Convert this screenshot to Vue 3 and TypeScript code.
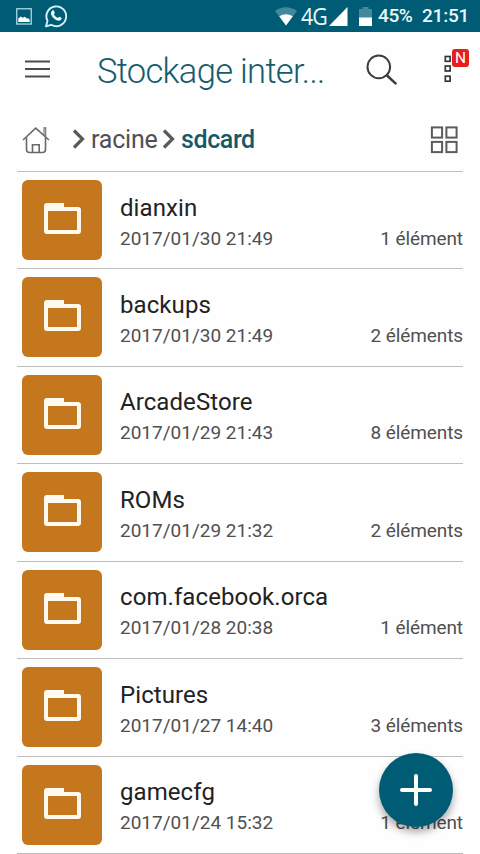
<script setup lang="ts">
interface Folder {
  name: string
  date: string
  count: string
}

const folders: Folder[] = [
  { name: 'dianxin', date: '2017/01/30 21:49', count: '1 élément' },
  { name: 'backups', date: '2017/01/30 21:49', count: '2 éléments' },
  { name: 'ArcadeStore', date: '2017/01/29 21:43', count: '8 éléments' },
  { name: 'ROMs', date: '2017/01/29 21:32', count: '2 éléments' },
  { name: 'com.facebook.orca', date: '2017/01/28 20:38', count: '1 élément' },
  { name: 'Pictures', date: '2017/01/27 14:40', count: '3 éléments' },
  { name: 'gamecfg', date: '2017/01/24 15:32', count: '1 élément' },
]
</script>

<template>
  <div class="screen">
    <div class="status">
      <svg class="s-photo" width="16" height="17" viewBox="0 0 16 17">
        <rect x="0.75" y="0.75" width="14.5" height="15.300" fill="none" stroke="#a9d9e4" stroke-width="1.300" />
        <path d="M2.300 14V10.500l2.500-2 2 1.200 2-1 2.200 1.800 1.200-.3 1.500 1.600V14z" fill="#fff" />
      </svg>
      <svg class="s-wa" width="22" height="24" viewBox="0 0 22 24">
        <path d="M1 22.400l1.500-5.600A9.900 9.900 0 1 1 6.300 20.800z" fill="none" stroke="#d3f3fa" stroke-width="1.900" stroke-linejoin="round" />
        <path d="M7.300 6.500c.5-.5 1.300-.5 1.600.1l.9 2.100c.1.400-.8 1.200-.8 1.600.8 1.700 2 2.800 3.800 3.600.5 0 1.100-1.400 1.600-1.200l2 1c.5.400.1 1.800-.7 2.400-1.300.9-3 .6-5-.4-2.300-1.200-4.200-3.500-4.700-5.600-.2-1.500.5-2.900 1.300-3.600z" fill="#e8fbff" />
      </svg>
      <span class="spacer"></span>
      <svg class="s-wifi" width="22" height="19" viewBox="0 0 22 19">
        <path d="M0 4Q11-3.500 22 4L11 18.500z" fill="#43899b" />
        <path d="M4.200 9.300Q11 5 17.800 9.300L11 18.500z" fill="#fff" />
      </svg>
      <span class="net">4G</span>
      <svg class="s-signal" width="19" height="19" viewBox="0 0 19 19"><path d="M18.500 0v19H0z" fill="#fff" /></svg>
      <svg class="s-battery" width="13" height="19" viewBox="0 0 13 19">
        <path d="M3.500 0h6v2H13v17H0V2h3.500z" fill="#43899b" />
        <path d="M0 10.500h13V19H0z" fill="#fff" />
      </svg>
      <span class="percent">45%</span>
      <span class="clock">21:51</span>
    </div>

    <header class="toolbar">
      <svg class="menu" width="26" height="20" viewBox="0 0 26 20">
        <path d="M0 2.500h25M0 10h25M0 17.500h25" stroke="#4c4c4c" stroke-width="2.200" />
      </svg>
      <h1>Stockage inter...</h1>
      <svg class="search" width="32" height="32" viewBox="0 0 32 32" fill="none" stroke="#3c3c3c" stroke-width="2">
        <circle cx="12.800" cy="12.900" r="11.300" />
        <path d="M20.500 21l9.800 9.200" stroke-width="2.500" />
      </svg>
      <div class="more">
        <svg width="8" height="28" viewBox="0 0 8 28" fill="none" stroke="#373737" stroke-width="1.700">
          <rect x="1.300" y="1.500" width="4.800" height="4.800" />
          <rect x="1.300" y="11" width="4.800" height="5" />
          <rect x="1.300" y="21.200" width="4.800" height="5" />
        </svg>
        <span class="badge">N</span>
      </div>
    </header>

    <nav class="crumbs">
      <svg class="home" width="28" height="28" viewBox="0 0 28 28" fill="none" stroke="#696969" stroke-width="1.600">
        <path d="M1 14L13.700 2.200 27 14" />
        <path d="M4.500 11.500v12q0 3 3 3h13q3 0 3-3v-12" />
        <path d="M22 9.500V1.700h1.700v9" stroke-width="1.100" />
        <path d="M10.500 26.500v-7.800h6.700v7.800" />
      </svg>
      <svg class="chev" width="13" height="21" viewBox="0 0 13 21"><path d="M2 1.500l8.500 8.500L2 18.500" fill="none" stroke="#5a5a5a" stroke-width="3.200" /></svg>
      <span class="root">racine</span>
      <svg class="chev" width="13" height="21" viewBox="0 0 13 21"><path d="M2 1.500l8.500 8.500L2 18.500" fill="none" stroke="#5a5a5a" stroke-width="3.200" /></svg>
      <span class="current">sdcard</span>
      <svg class="grid" width="28" height="28" viewBox="0 0 28 28" fill="none" stroke="#5c5c5c" stroke-width="2">
        <rect x="1.900" y="1.400" width="10.200" height="10.200" />
        <rect x="16.400" y="1.400" width="10.200" height="10.200" />
        <rect x="1.900" y="15.900" width="10.200" height="10.200" />
        <rect x="16.400" y="15.900" width="10.200" height="10.200" />
      </svg>
    </nav>

    <ul class="list">
      <li v-for="folder in folders" :key="folder.name">
        <div class="tile">
          <svg width="38" height="33" viewBox="0 0 38 33">
            <path d="M3 0h17v4h14q3 0 3 3v21q0 3-3 3H3q-3 0-3-3V3q0-3 3-3zM4 8v19h29V8z" fill="#fffaf0" fill-rule="evenodd" />
          </svg>
        </div>
        <div class="info">
          <span class="name">{{ folder.name }}</span>
          <div class="meta">
            <span class="date">{{ folder.date }}</span>
            <span class="count">{{ folder.count }}</span>
          </div>
        </div>
      </li>
    </ul>

    <button class="fab" aria-label="+">
      <svg width="32" height="32" viewBox="0 0 32 32"><path d="M16 2v28M2 16h28" stroke="#fff" stroke-width="4" stroke-linecap="round" /></svg>
    </button>
  </div>
</template>

<style>
body {
  margin: 0;
  overflow: hidden;
}
</style>

<style scoped>
.screen {
  position: relative;
  width: 480px;
  height: 854px;
  overflow: hidden;
  background: #fefefe;
  font-family: Roboto, "Liberation Sans", sans-serif;
}
svg {
  display: block;
  flex: none;
}
.status {
  display: flex;
  align-items: center;
  box-sizing: border-box;
  height: 32px;
  padding: 0 12px 0 16px;
  background: #005c75;
  color: #e9f8fb;
  white-space: nowrap;
}
.s-wa {
  margin-left: 13px;
}
.spacer {
  flex: 1;
}
.s-wifi {
  margin-top: 1px;
}
.net {
  width: 28px;
  margin-left: 4px;
  font: 24px/34px "Open Sans", sans-serif;
  letter-spacing: -1px;
  transform: scaleX(0.89);
  transform-origin: left;
}
.s-battery {
  margin-left: 11px;
}
.percent,
.clock {
  font-size: 19px;
  font-weight: 500;
  line-height: 34px;
}
.percent {
  width: 35px;
  margin-left: 6px;
  letter-spacing: -0.4px;
}
.clock {
  width: 46px;
  margin-left: 9px;
  letter-spacing: -0.2px;
}
.toolbar {
  display: flex;
  box-sizing: border-box;
  height: 76px;
  padding: 0 11px 0 25px;
}
.menu {
  margin-top: 27px;
}
h1 {
  width: 269px;
  margin: 0 0 0 46px;
  font-size: 34.500px;
  font-weight: 300;
  line-height: 78px;
  letter-spacing: -0.68px;
  color: #165c6c;
  white-space: nowrap;
}
.search {
  margin-top: 22px;
}
.more {
  position: relative;
  margin: 23px 0 0 46px;
}
.badge {
  position: absolute;
  left: 8px;
  top: -6px;
  width: 17px;
  height: 18px;
  border-radius: 3px;
  background: #e4201f;
  color: #fff;
  font-size: 15.500px;
  line-height: 19px;
  text-align: center;
}
.crumbs {
  display: flex;
  align-items: center;
  box-sizing: border-box;
  height: 63px;
  padding: 0 22px;
  font-size: 25px;
  line-height: 32px;
}
.home {
  margin-right: 22px;
}
.root {
  width: 67px;
  margin: 0 4px 0 6px;
  letter-spacing: -0.2px;
  color: #505050;
}
.current {
  margin-left: 6px;
  color: #155a69;
  font-weight: 500;
  letter-spacing: -0.400px;
}
.grid {
  margin-left: auto;
}
.list {
  list-style: none;
  margin: 0;
  padding: 0 17px 0 17px;
}
li {
  display: flex;
  box-sizing: border-box;
  height: 97.430px;
  padding: 8px 0 0 5px;
  border-top: 1px solid #bdbdbd;
}
li:last-child {
  border-bottom: 1px solid #bdbdbd;
  height: 98.430px;
}
.tile {
  display: flex;
  flex: none;
  box-sizing: border-box;
  width: 80px;
  height: 80px;
  padding: 23px 0 0 22px;
  border-radius: 6px;
  background: #c4771c;
}
.info {
  display: flex;
  flex: 1;
  flex-direction: column;
  margin-left: 18px;
  padding-top: 11.500px;
  white-space: nowrap;
}
.name {
  font-size: 24px;
  line-height: 32px;
  letter-spacing: 0.08px;
  color: #222;
}
.meta {
  display: flex;
  justify-content: space-between;
  font-size: 19px;
  line-height: 30px;
  color: #505050;
}
.count {
  letter-spacing: -0.1px;
}
.fab {
  position: absolute;
  left: 379px;
  top: 753px;
  display: flex;
  align-items: center;
  justify-content: center;
  width: 74px;
  height: 74px;
  padding: 0;
  border: 0;
  border-radius: 50%;
  background: #005c75;
  box-shadow: 0 5px 9px rgba(0, 0, 0, 0.35);
}
</style>
